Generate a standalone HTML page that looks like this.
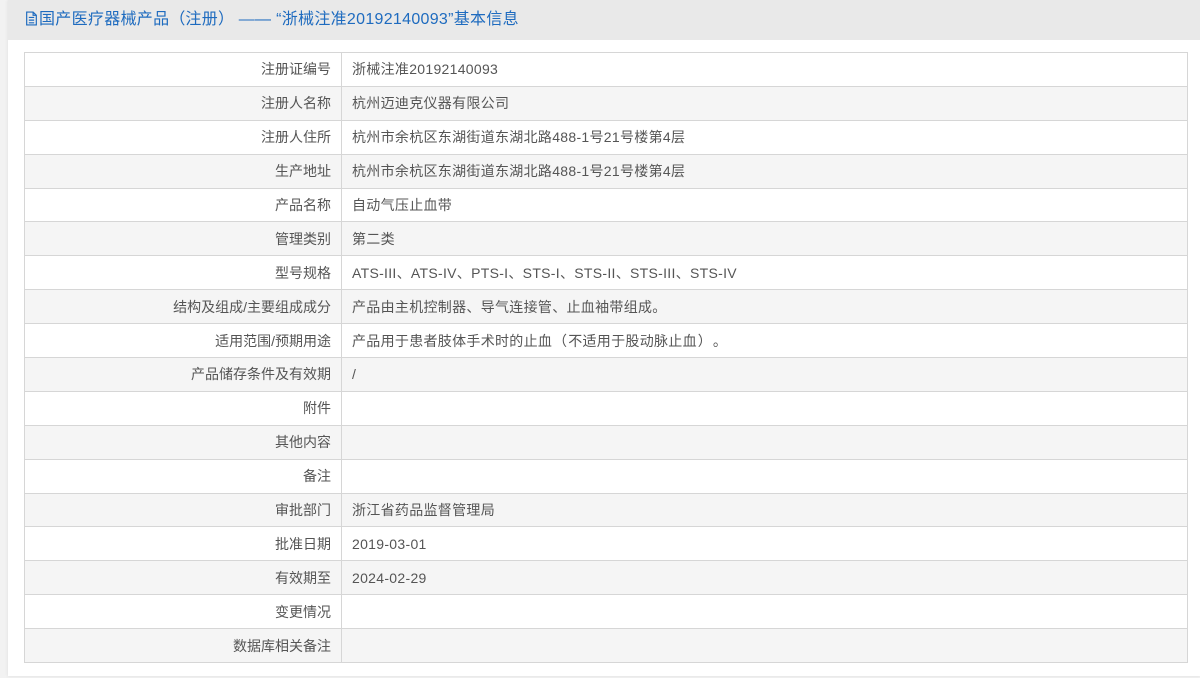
<!DOCTYPE html>
<html><head><meta charset="utf-8"><style>
*{margin:0;padding:0;box-sizing:border-box}
body{width:1200px;height:678px;background:#f2f2f2;font-family:"Liberation Sans","Noto Sans CJK SC",sans-serif;overflow:hidden;position:relative}
.panel{position:absolute;left:8px;top:0;width:1192px;height:676px;background:#fff;box-shadow:0 0 3px #ddd}
.hd{height:40px;background:#e9e9e9;color:#1e6bbf;font-size:16px;line-height:40px;padding-left:17px;letter-spacing:0.3px}
.hd svg{vertical-align:-2px;margin-right:1px}
.p{display:inline-block;width:16px;text-align:center}
table{position:absolute;left:16px;top:52px;width:1164px;border-collapse:collapse;border:1px solid #cfcfcf}
td{height:33.9px;border:1px solid #d6d6d6;font-size:14px;color:#555;padding:0 10px;letter-spacing:0.3px}
td.l{width:317px;text-align:right;padding-right:10px;letter-spacing:0}
tr:nth-child(even) td{background:#f5f5f5}
</style></head><body>
<div class="panel">
<div class="hd"><svg width="13" height="15" viewBox="0 0 12 14"><path d="M1.5 1h6l3 3v9h-9z M7.5 1v3h3 M3.5 6h5 M3.5 8.5h5 M3.5 11h5" fill="none" stroke="#1e6bbf" stroke-width="1.1"/></svg>国产医疗器械产品<span class="p">（</span>注册<span class="p">）</span> —— “浙械注准20192140093”基本信息</div>
<table>
<tr><td class="l">注册证编号</td><td>浙械注准20192140093</td></tr>
<tr><td class="l">注册人名称</td><td>杭州迈迪克仪器有限公司</td></tr>
<tr><td class="l">注册人住所</td><td>杭州市余杭区东湖街道东湖北路488-1号21号楼第4层</td></tr>
<tr><td class="l">生产地址</td><td>杭州市余杭区东湖街道东湖北路488-1号21号楼第4层</td></tr>
<tr><td class="l">产品名称</td><td>自动气压止血带</td></tr>
<tr><td class="l">管理类别</td><td>第二类</td></tr>
<tr><td class="l">型号规格</td><td>ATS-III、ATS-IV、PTS-I、STS-I、STS-II、STS-III、STS-IV</td></tr>
<tr><td class="l">结构及组成/主要组成成分</td><td>产品由主机控制器、导气连接管、止血袖带组成。</td></tr>
<tr><td class="l">适用范围/预期用途</td><td>产品用于患者肢体手术时的止血<span class="p">（</span>不适用于股动脉止血<span class="p">）</span>。</td></tr>
<tr><td class="l">产品储存条件及有效期</td><td>/</td></tr>
<tr><td class="l">附件</td><td></td></tr>
<tr><td class="l">其他内容</td><td></td></tr>
<tr><td class="l">备注</td><td></td></tr>
<tr><td class="l">审批部门</td><td>浙江省药品监督管理局</td></tr>
<tr><td class="l">批准日期</td><td>2019-03-01</td></tr>
<tr><td class="l">有效期至</td><td>2024-02-29</td></tr>
<tr><td class="l">变更情况</td><td></td></tr>
<tr><td class="l">数据库相关备注</td><td></td></tr>
</table>
</div>
</body></html>
